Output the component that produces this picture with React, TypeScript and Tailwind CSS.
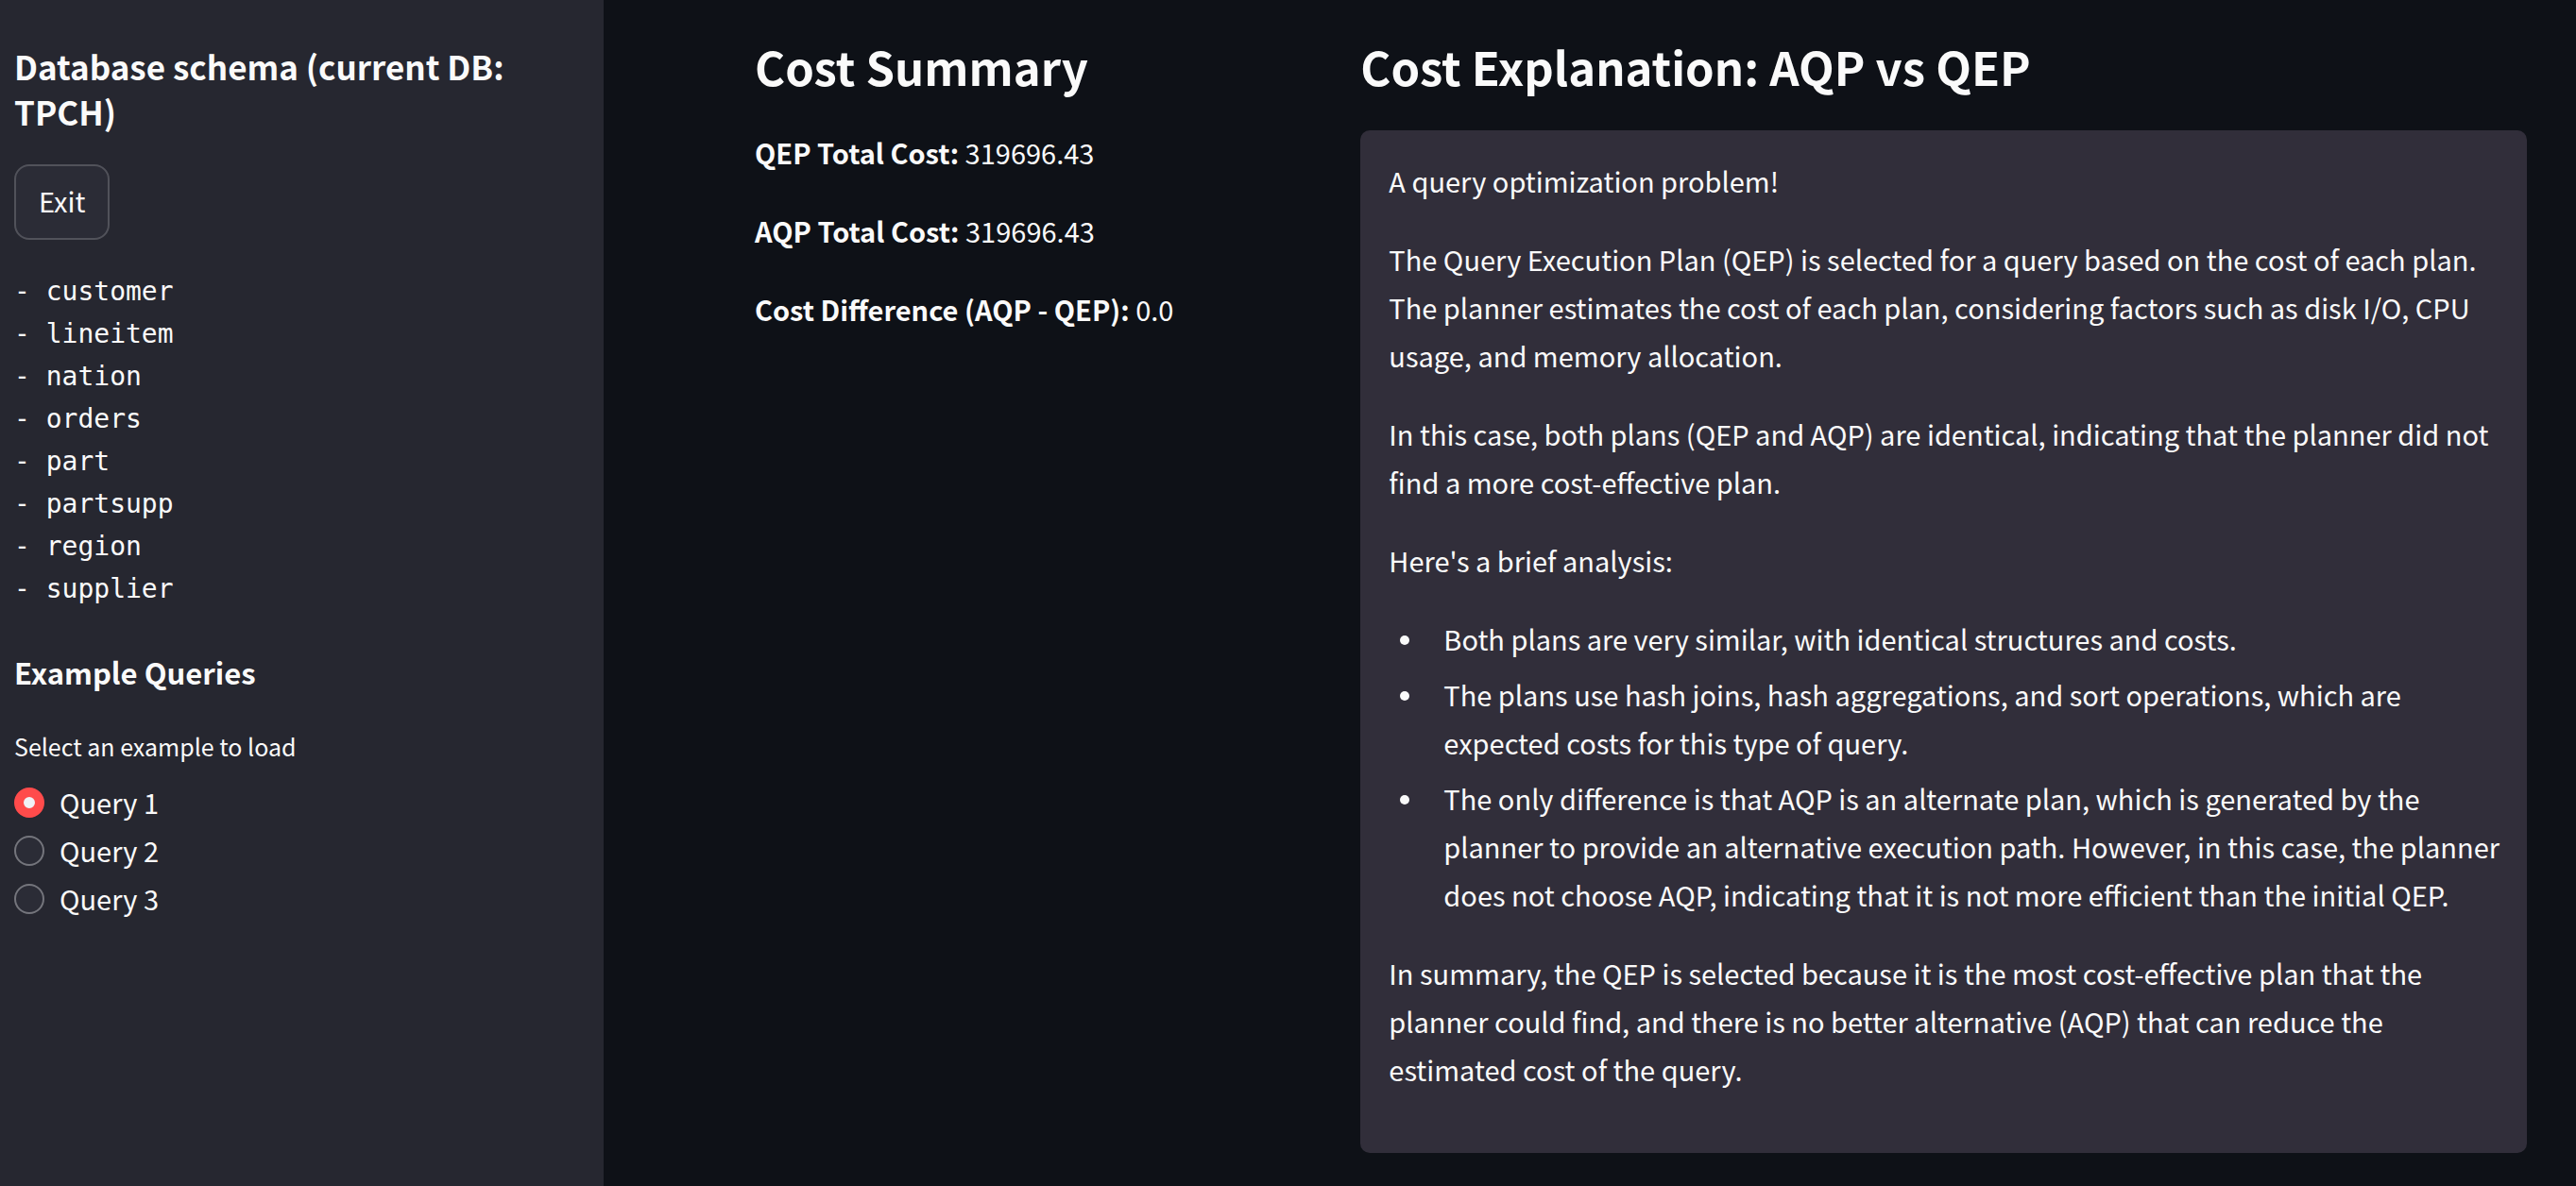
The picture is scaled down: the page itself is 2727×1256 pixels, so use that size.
import { useState } from 'react';

const tables = ['customer', 'lineitem', 'nation', 'orders', 'part', 'partsupp', 'region', 'supplier'];

const queries = ['Query 1', 'Query 2', 'Query 3'];

const costs = [
  { label: 'QEP Total Cost:', value: '319696.43' },
  { label: 'AQP Total Cost:', value: '319696.43' },
  { label: 'Cost Difference (AQP - QEP):', value: '0.0' },
];

const findings = [
  'Both plans are very similar, with identical structures and costs.',
  'The plans use hash joins, hash aggregations, and sort operations, which are expected costs for this type of query.',
  'The only difference is that AQP is an alternate plan, which is generated by the planner to provide an alternative execution path. However, in this case, the planner does not choose AQP, indicating that it is not more efficient than the initial QEP.',
];

function Sidebar() {
  const [selected, setSelected] = useState(queries[0]);

  return (
    <aside className="w-[639px] shrink-0 bg-[#262730] px-[15px] pt-[46px]">
      <h2 className="text-[35px] leading-[48px] font-semibold">Database schema (current DB: TPCH)</h2>
      <button
        type="button"
        className="mt-8 flex h-20 items-center rounded-2xl border-2 border-[#51525a] bg-[#2b2c36] px-6 pb-1"
      >
        Exit
      </button>
      <pre className="mt-8 font-['DejaVu_Sans_Mono',monospace] text-[28px] leading-[45px]">
        {tables.map((name) => `- ${name}`).join('\n')}
      </pre>
      <h3 className="mt-11 text-[31px] leading-[44px] font-semibold">Example Queries</h3>
      <fieldset className="mt-[34px]">
        <legend className="text-[25px] leading-[44px]">Select an example to load</legend>
        <div className="pt-3">
          {queries.map((query) => (
            <label key={query} className="flex items-center gap-4">
              <input
                type="radio"
                name="example-query"
                checked={selected === query}
                onChange={() => setSelected(query)}
                className="size-8 shrink-0 appearance-none rounded-full border-2 border-[#74757c] bg-[#2b2c36] checked:border-[10px] checked:border-[#ff4b4b] checked:bg-[#f0f2f6]"
              />
              {query}
            </label>
          ))}
        </div>
      </fieldset>
    </aside>
  );
}

function CostSummary() {
  return (
    <section>
      <h1 className="text-[49px] leading-[68px] font-semibold">Cost Summary</h1>
      <div className="mt-8 flex flex-col gap-8">
        {costs.map(({ label, value }) => (
          <p key={label}>
            <strong className="font-semibold">{label}</strong> {value}
          </p>
        ))}
      </div>
    </section>
  );
}

function CostExplanation() {
  return (
    <section>
      <h1 className="text-[49px] leading-[68px] font-semibold">Cost Explanation: AQP vs QEP</h1>
      <div className="mt-[34px] flex flex-col gap-8 rounded-[10px] bg-[#312e3a] pt-7 pr-6 pb-[63px] pl-[30px]">
        <p>A query optimization problem!</p>
        <p>
          The Query Execution Plan (QEP) is selected for a query based on the cost of each plan. The planner estimates
          the cost of each plan, considering factors such as disk I/O, CPU usage, and memory allocation.
        </p>
        <p>
          In this case, both plans (QEP and AQP) are identical, indicating that the planner did not find a more
          cost-effective plan.
        </p>
        <p>Here's a brief analysis:</p>
        <ul className="flex flex-col gap-2 pl-3">
          {findings.map((text) => (
            <li
              key={text}
              className="flex gap-9 before:mt-[22px] before:size-[10px] before:shrink-0 before:rounded-full before:bg-current before:content-['']"
            >
              {text}
            </li>
          ))}
        </ul>
        <p>
          In summary, the QEP is selected because it is the most cost-effective plan that the planner could find, and
          there is no better alternative (AQP) that can reduce the estimated cost of the query.
        </p>
      </div>
    </section>
  );
}

export default function App() {
  return (
    <div className="flex min-h-screen bg-[#0e1117] font-['Noto_Sans_CJK_SC',sans-serif] text-[29px] leading-[51px] text-[#fafafa]">
      <Sidebar />
      <main className="grid min-w-0 flex-1 grid-cols-[minmax(0,1fr)_minmax(0,2fr)] gap-6 pt-9 pr-[52px] pb-[35px] pl-40">
        <CostSummary />
        <CostExplanation />
      </main>
    </div>
  );
}
